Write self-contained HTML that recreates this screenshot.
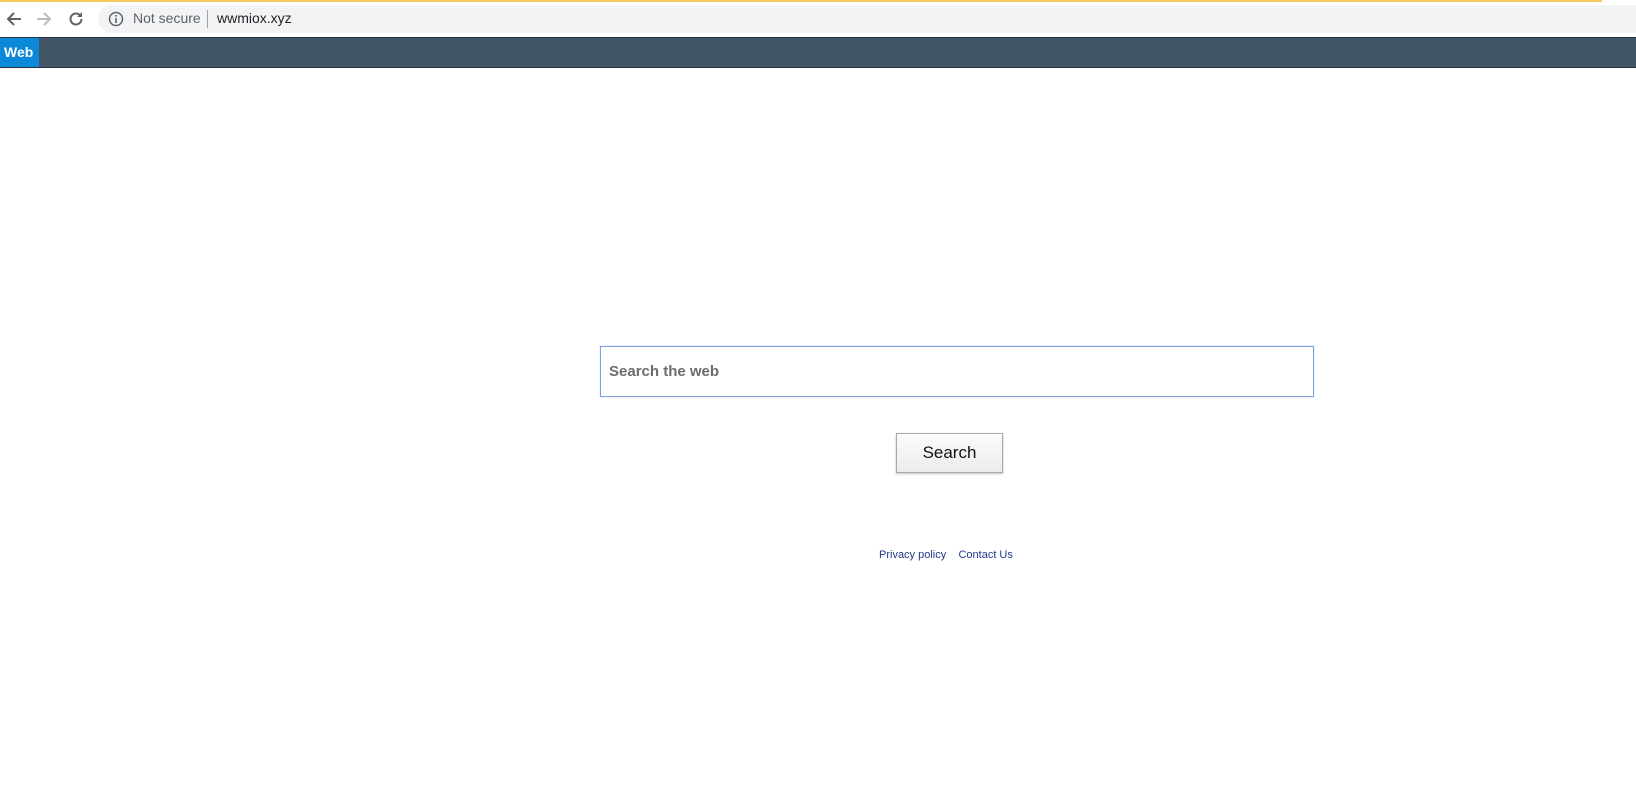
<!DOCTYPE html>
<html><head><meta charset="utf-8"><style>
*{margin:0;padding:0;box-sizing:border-box}
body{width:1636px;height:792px;background:#fff;font-family:"Liberation Sans",Arial,sans-serif;position:relative;overflow:hidden}
.yl{position:absolute;left:0;top:0;width:1602px;height:2px;background:#f3c95a}
.addr{position:absolute;left:98px;top:5px;right:0;height:28px;background:#f1f3f4;border-radius:14px 0 0 14px}
.ns{position:absolute;left:133px;top:10px;font-size:14px;color:#5f6368}
.sep{position:absolute;left:207px;top:10px;width:1px;height:18px;background:#9aa0a6}
.url{position:absolute;left:217px;top:10px;font-size:14px;color:#202124}
.bar{position:absolute;left:0;top:37px;width:1636px;height:31px;background:#415464;border-top:1px solid #26343f;border-bottom:1px solid #26343f}
.web{position:absolute;left:0;top:38px;width:39px;height:29px;background:#0c88d8;color:#fff;font-weight:bold;font-size:14px;line-height:29px;padding-left:4px}
.inp{position:absolute;left:600px;top:346px;width:714px;height:51px;border:1px solid #7b9fe0;box-shadow:0 0 1px #a8c0ee}
.inp span{position:absolute;left:8px;top:16px;font-size:15px;font-weight:bold;color:#6d6d6d}
.btn{position:absolute;left:896px;top:433px;width:107px;height:40px;border:1px solid #a9a9a9;background:linear-gradient(#fbfbfb,#ececec);box-shadow:0 1px 2px rgba(0,0,0,.25);font-size:17px;text-align:center;line-height:38px;color:#111}
.links{position:absolute;left:879px;top:549px;font-size:11px;color:#1f3a8a}
</style></head><body>
<div class="yl"></div>
<svg style="position:absolute;left:4px;top:9px" width="20" height="20" viewBox="0 0 20 20"><path d="M17 10H4M10 4L4 10l6 6" stroke="#5f6368" stroke-width="2" fill="none"/></svg>
<svg style="position:absolute;left:34px;top:9px" width="20" height="20" viewBox="0 0 20 20"><path d="M3 10h13M10 4l6 6-6 6" stroke="#b8bbbf" stroke-width="2" fill="none"/></svg>
<svg style="position:absolute;left:66px;top:9px" width="20" height="20" viewBox="0 0 20 20"><path d="M15.5 10a5.5 5.5 0 1 1-1.6-3.9" stroke="#5f6368" stroke-width="2" fill="none"/><path d="M16 3v5h-5z" fill="#5f6368"/></svg>
<div class="addr"></div>
<svg style="position:absolute;left:108px;top:11px" width="16" height="16" viewBox="0 0 16 16"><circle cx="8" cy="8" r="6.5" stroke="#5f6368" stroke-width="1.5" fill="none"/><rect x="7.2" y="7" width="1.6" height="5" fill="#5f6368"/><rect x="7.2" y="4" width="1.6" height="1.6" fill="#5f6368"/></svg>
<div class="ns">Not secure</div><div class="sep"></div><div class="url">wwmiox.xyz</div>
<div class="bar"></div><div class="web">Web</div>
<div class="inp"><span>Search the web</span></div>
<div class="btn">Search</div>
<div class="links">Privacy policy&nbsp;&nbsp;&nbsp;&nbsp;Contact Us</div>
</body></html>
